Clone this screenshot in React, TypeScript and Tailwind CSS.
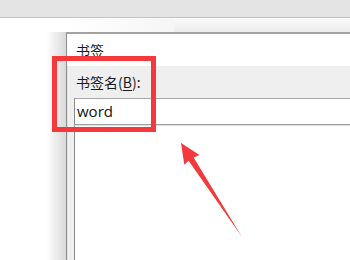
import React from "react";

export default function App() {
  const cjk = { fontFamily: '"Noto Sans CJK SC", "Noto Sans", sans-serif' };
  return (
    <div className="relative w-[350px] h-[260px] overflow-hidden bg-white flex flex-col">
      <div className="h-[18px] shrink-0 bg-[#e4e4e4] border-b border-[#c4c4c4]" />
      <div className="flex flex-1 min-h-0">
        <div className="w-[66px] shrink-0 flex flex-col">
          <div className="h-[14px] shrink-0 bg-white" />
          <div className="flex-1 bg-gradient-to-r from-white from-70% to-[#d9d9d9]" />
        </div>
        <div className="flex-1 flex flex-col min-w-0">
          <div className="h-[14px] shrink-0 flex">
            <div className="w-[108px] shrink-0 bg-gradient-to-r from-white to-[#f6f6f6]" />
            <div className="flex-1 bg-gradient-to-b from-[#fafafa] to-[#ececec]" />
          </div>
          <div className="flex-1 flex flex-col border-t-2 border-l border-t-[#a3a3a3] border-l-[#8e8e8e]">
            <div className="h-[32px] shrink-0 bg-white flex items-center pl-[9px] text-[14px] text-[#1a1a1a]" style={cjk}>
              书签
            </div>
            <div className="flex-1 flex flex-col bg-[#efefef] border-l border-[#e2e2e2]">
              <div className="h-[32px] shrink-0 flex items-center pl-[8px] text-[14px] text-[#1a1a1a]" style={cjk}>
                书签名(<span className="underline underline-offset-2">B</span>):
              </div>
              <div className="ml-[6px] h-[27px] shrink-0 bg-white border-t border-l border-b border-t-[#a8a8a8] border-l-[#8a8a8a] border-b-[#a0a0a0] flex items-center pl-[2px] text-[15px] text-[#111]" style={{ fontFamily: '"Open Sans", "Noto Sans", sans-serif' }}>
                word
              </div>
              <div className="ml-[6px] flex-1 bg-white border-l border-[#8a8a8a] border-t border-t-[#e0e0e0]" />
            </div>
          </div>
        </div>
      </div>
      <div className="absolute left-[52px] top-[56px] w-[104px] h-[76px] border-[5px] border-[#f4393c]" />
      <svg className="absolute left-0 top-0" width="350" height="260" viewBox="0 0 350 260">
        <polygon
          points="181,143 199.5,155 193.6,157.5 242,237 188.6,160.7 184.3,164.7"
          fill="#f4393c"
        />
      </svg>
    </div>
  );
}
